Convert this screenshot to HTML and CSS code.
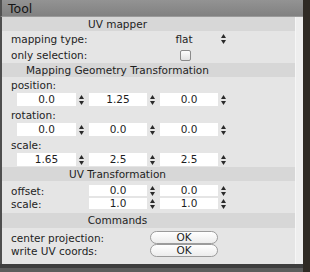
FILE: index.html
```html
<!DOCTYPE html>
<html>
<head>
<meta charset="utf-8">
<link rel="stylesheet" href="styles.css">
</head>
<body>
<div class="window">
  <div class="titlebar">Tool</div>
  <div class="frame">
    <div class="panel">
      <div class="band"><span class="head">UV mapper</span></div>
      <div class="grid row-a">
        <span class="label">mapping type:</span>
        <div class="popup"><span class="popup-text">flat</span><svg class="step" viewBox="0 0 5 10"><path d="M0 4 L2.5 0 L5 4 Z M0 6 L5 6 L2.5 10 Z"/></svg></div>
      </div>
      <div class="grid row-b">
        <span class="label">only selection:</span>
        <div class="check-wrap"><span class="check"></span></div>
      </div>
      <div class="band"><span class="head">Mapping Geometry Transformation</span></div>

      <div class="group">
        <div class="sublabel">position:</div>
        <div class="grid vals">
          <div class="cell c1"><span class="field">0.0</span><svg class="step" viewBox="0 0 5 10"><path d="M0 4 L2.5 0 L5 4 Z M0 6 L5 6 L2.5 10 Z"/></svg></div>
          <div class="cell c2"><span class="field">1.25</span><svg class="step" viewBox="0 0 5 10"><path d="M0 4 L2.5 0 L5 4 Z M0 6 L5 6 L2.5 10 Z"/></svg></div>
          <div class="cell c3"><span class="field">0.0</span><svg class="step" viewBox="0 0 5 10"><path d="M0 4 L2.5 0 L5 4 Z M0 6 L5 6 L2.5 10 Z"/></svg></div>
        </div>
      </div>
      <div class="group">
        <div class="sublabel">rotation:</div>
        <div class="grid vals">
          <div class="cell c1"><span class="field">0.0</span><svg class="step" viewBox="0 0 5 10"><path d="M0 4 L2.5 0 L5 4 Z M0 6 L5 6 L2.5 10 Z"/></svg></div>
          <div class="cell c2"><span class="field">0.0</span><svg class="step" viewBox="0 0 5 10"><path d="M0 4 L2.5 0 L5 4 Z M0 6 L5 6 L2.5 10 Z"/></svg></div>
          <div class="cell c3"><span class="field">0.0</span><svg class="step" viewBox="0 0 5 10"><path d="M0 4 L2.5 0 L5 4 Z M0 6 L5 6 L2.5 10 Z"/></svg></div>
        </div>
      </div>
      <div class="group">
        <div class="sublabel">scale:</div>
        <div class="grid vals">
          <div class="cell c1"><span class="field">1.65</span><svg class="step" viewBox="0 0 5 10"><path d="M0 4 L2.5 0 L5 4 Z M0 6 L5 6 L2.5 10 Z"/></svg></div>
          <div class="cell c2"><span class="field">2.5</span><svg class="step" viewBox="0 0 5 10"><path d="M0 4 L2.5 0 L5 4 Z M0 6 L5 6 L2.5 10 Z"/></svg></div>
          <div class="cell c3"><span class="field">2.5</span><svg class="step" viewBox="0 0 5 10"><path d="M0 4 L2.5 0 L5 4 Z M0 6 L5 6 L2.5 10 Z"/></svg></div>
        </div>
      </div>

      <div class="band"><span class="head">UV Transformation</span></div>
      <div class="uv">
        <div class="grid uvrow">
          <span class="label">offset:</span>
          <div class="cell c2"><span class="field small">0.0</span><svg class="step" viewBox="0 0 5 10"><path d="M0 4 L2.5 0 L5 4 Z M0 6 L5 6 L2.5 10 Z"/></svg></div>
          <div class="cell c3"><span class="field small">0.0</span><svg class="step" viewBox="0 0 5 10"><path d="M0 4 L2.5 0 L5 4 Z M0 6 L5 6 L2.5 10 Z"/></svg></div>
        </div>
        <div class="grid uvrow">
          <span class="label">scale:</span>
          <div class="cell c2"><span class="field small">1.0</span><svg class="step" viewBox="0 0 5 10"><path d="M0 4 L2.5 0 L5 4 Z M0 6 L5 6 L2.5 10 Z"/></svg></div>
          <div class="cell c3"><span class="field small">1.0</span><svg class="step" viewBox="0 0 5 10"><path d="M0 4 L2.5 0 L5 4 Z M0 6 L5 6 L2.5 10 Z"/></svg></div>
        </div>
      </div>

      <div class="band band-cmd"><span class="head">Commands</span></div>
      <div class="cmds">
        <div class="grid cmdrow">
          <span class="label">center projection:</span>
          <div class="btn-wrap"><span class="btn">OK</span></div>
        </div>
        <div class="grid cmdrow">
          <span class="label">write UV coords:</span>
          <div class="btn-wrap"><span class="btn">OK</span></div>
        </div>
      </div>
    </div>
    <div class="gutter"></div>
  </div>
  <div class="bottom"></div>
</div>
</body>
</html>
```

FILE: styles.css
```css
html, body {
  margin: 0;
  padding: 0;
}
body {
  background: #2f2a24;
  font-family: "DejaVu Sans", Verdana, sans-serif;
  font-size: 10.5px;
  color: #1e1e1e;
  width: 310px;
  height: 272px;
  overflow: hidden;
}
.window {
  width: 303px;
  display: flex;
  flex-direction: column;
}
.titlebar {
  box-sizing: border-box;
  height: 17px;
  background: linear-gradient(#939393, #818181);
  border-left: 2px solid #505050;
  border-bottom: 1px solid #9a9a9a;
  padding-left: 6px;
  font-size: 12.5px;
  line-height: 17px;
  color: #151515;
}
.frame {
  display: flex;
  border-left: 2px solid #4e4e4e;
  background: #eeeeee;
}
.panel {
  width: 294px;
  background: #e5e5e5;
  display: flex;
  flex-direction: column;
  padding-bottom: 7px;
}
.gutter {
  width: 7px;
  background: #eeeeee;
  border-left: 1px solid #f6f6f6;
}
.bottom {
  height: 4px;
  background: #3e3e3e;
  border-bottom: 4px solid #5c5c5c;
}
.band {
  height: 14px;
  background: #d7d7d7;
  line-height: 14px;
}
.head {
  display: block;
  width: 231px;
  text-align: center;
  white-space: nowrap;
}
.grid {
  display: grid;
  grid-template-columns: 78px 71px 71px;
  padding-left: 9px;
  align-items: center;
}
.label {
  grid-column: 1;
  white-space: nowrap;
}
.row-a {
  height: 16px;
}
.row-b {
  height: 16px;
}
.popup {
  grid-column: 2 / 4;
  margin-left: 61px;
  display: flex;
  align-items: center;
}
.popup-text {
  width: 68px;
  text-align: center;
}
.check-wrap {
  grid-column: 2 / 4;
  margin-left: 61px;
  width: 68px;
  display: flex;
  justify-content: center;
}
.check {
  width: 9px;
  height: 9px;
  border: 1px solid #8a8a8a;
  border-radius: 2px;
  background: linear-gradient(#fdfdfd, #e2e2e2);
  margin-left: 3px;
}
.group {
  display: flex;
  flex-direction: column;
}
.sublabel {
  height: 14px;
  line-height: 14px;
  padding-left: 9px;
  margin-top: 1px;
}
.vals {
  height: 15px;
}
.cell {
  display: flex;
  align-items: center;
}
.c1 { grid-column: 1; margin-left: 6px; }
.c2 { grid-column: 2; }
.c3 { grid-column: 3; }
.field {
  display: block;
  width: 59px;
  height: 13px;
  line-height: 13px;
  background: #ffffff;
  text-align: center;
}
.c2 .field, .c3 .field { width: 58px; }
.field.small {
  height: 11px;
  line-height: 11px;
}
.step {
  width: 5px;
  height: 10px;
  margin-left: 3px;
  fill: #2a2a2a;
}
.uv {
  padding-top: 3px;
  padding-bottom: 3px;
}
.uvrow {
  height: 13px;
}
.band-cmd {
  height: 15px;
  line-height: 15px;
}
.cmds {
  padding-top: 3px;
}
.cmdrow {
  height: 13px;
}
.btn-wrap {
  grid-column: 2 / 4;
  margin-left: 61px;
  display: flex;
}
.btn {
  display: block;
  width: 66px;
  height: 11px;
  line-height: 11px;
  border: 1px solid #9b9b9b;
  border-radius: 7px;
  background: linear-gradient(#ffffff, #ececec);
  text-align: center;
}
```
